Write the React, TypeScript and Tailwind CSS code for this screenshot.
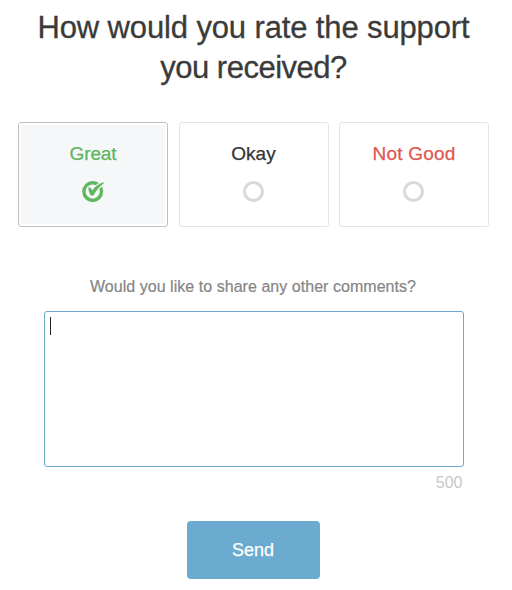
import { useState } from 'react'
import clsx from 'clsx'

const MAX_LENGTH = 500

const ratings = [
  { id: 'great', label: 'Great', color: 'text-[#5cb55c] tracking-[-0.1px]' },
  { id: 'okay', label: 'Okay', color: 'text-[#333333]' },
  { id: 'not-good', label: 'Not Good', color: 'text-[#df5650] tracking-[0.2px]' },
]

function CheckedIcon() {
  return (
    <svg width="22" height="21" viewBox="0 0 22 21" fill="none">
      <circle cx="10.7" cy="10.6" r="8.8" stroke="#5fb75f" strokeWidth="3.4" />
      {/* outlined in the card colour so the tick cuts through the ring */}
      <path
        d="M6.2 6.6C8 6.1 9.5 7.2 10.2 9.4C12.8 5.8 16.7 2.7 21.2 1.2C21.9 1.6 21.9 2.1 21.6 2.6C17.4 5.7 14.3 9.8 11.8 14C10.8 14.9 9.3 14.8 8.4 14C7.3 11.9 6.5 9.2 6.2 6.6Z"
        fill="#5fb75f"
        stroke="#f5f7f9"
        strokeWidth="2"
        paintOrder="stroke"
      />
    </svg>
  )
}

function EmptyIcon() {
  return (
    <svg width="21" height="21" viewBox="0 0 21 21" fill="none" className="mr-px">
      <circle cx="10.5" cy="10.5" r="9" stroke="#d8d9db" strokeWidth="3" />
    </svg>
  )
}

export default function App() {
  const [selected, setSelected] = useState('great')
  const [comment, setComment] = useState('')

  return (
    <form
      onSubmit={(e) => e.preventDefault()}
      className="flex h-[590px] w-[512px] flex-col items-center bg-white pr-[5px] pt-[8px] font-['Liberation_Sans',Arial,sans-serif]"
    >
      <h1 className="whitespace-nowrap text-center text-[31px] leading-[40px] tracking-[-0.13px] text-[#3a3a3a] [-webkit-text-stroke:0.3px_#3a3a3a]">
        How would you rate the support
        <br />
        <span className="tracking-[-0.5px]">you received?</span>
      </h1>

      <div className="mt-[34px] flex w-[471px] justify-between">
        {ratings.map((rating) => {
          const active = selected === rating.id
          return (
            <button
              key={rating.id}
              type="button"
              onClick={() => setSelected(rating.id)}
              className={clsx(
                'h-[105px] w-[150px] rounded-[3px] border p-[2px]',
                active ? 'border-[#c0c0c0]' : 'border-[#e2e3e4]'
              )}
            >
              <span
                className={clsx(
                  'flex h-full flex-col items-center pt-[17px]',
                  active && 'bg-[#f5f7f9]'
                )}
              >
                <span className={clsx('text-[19px] leading-6 [-webkit-text-stroke:0.25px]', rating.color)}>
                  {rating.label}
                </span>
                <span className="mt-[15px]">{active ? <CheckedIcon /> : <EmptyIcon />}</span>
              </span>
            </button>
          )
        })}
      </div>

      <label
        htmlFor="comment"
        className="mt-[50px] pr-px text-base leading-5 tracking-[0.04px] text-[#858585] [-webkit-text-stroke:0.2px]"
      >
        Would you like to share any other comments?
      </label>

      <div className="relative mt-[14px] ml-px w-[420px]">
        <textarea
          id="comment"
          maxLength={MAX_LENGTH}
          value={comment}
          onChange={(e) => setComment(e.target.value)}
          className="block h-[156px] w-full resize-none rounded-[3px] border border-[#68abcf] p-[5px] text-base text-[#333333] outline-none"
        />
        {!comment && <span className="pointer-events-none absolute left-[6px] top-[6px] h-[18px] w-px bg-[#222222]" />}
      </div>
      <div className="mt-[6px] w-[420px] pr-px text-right text-base leading-5 text-[#c8c8c8]">
        {MAX_LENGTH - comment.length}
      </div>

      <button
        type="submit"
        className="mt-7 h-[58px] w-[133px] rounded bg-[#6aabcf] pr-px text-lg text-white [-webkit-text-stroke:0.25px]"
      >
        Send
      </button>
    </form>
  )
}
